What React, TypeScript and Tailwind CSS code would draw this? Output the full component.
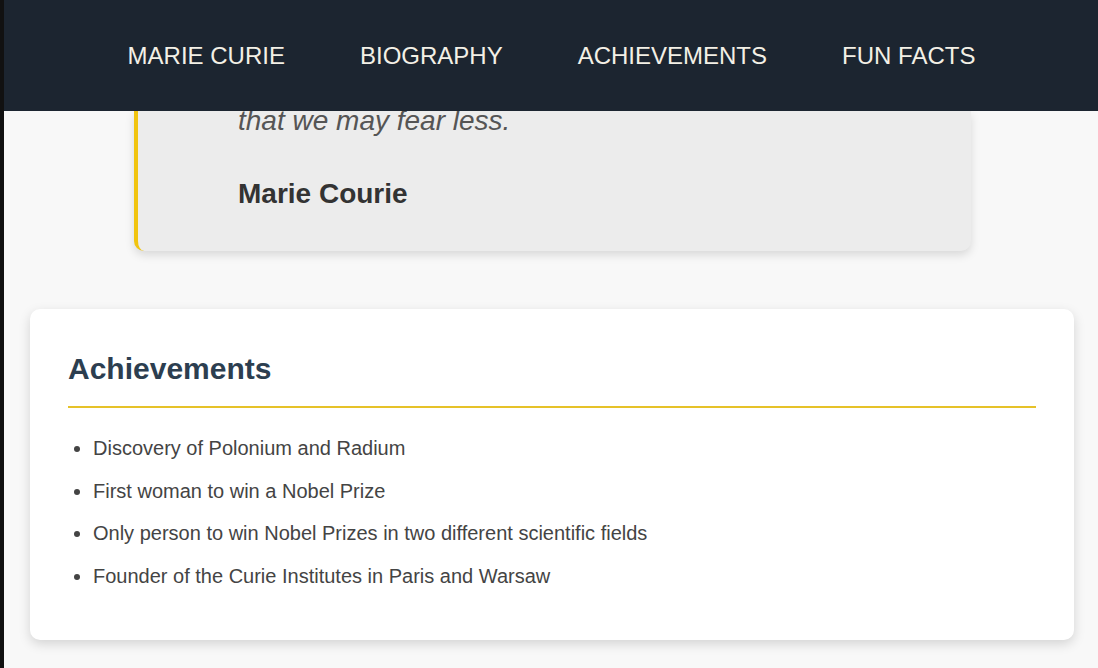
const navLinks = ['MARIE CURIE', 'BIOGRAPHY', 'ACHIEVEMENTS', 'FUN FACTS']

const achievements = [
  'Discovery of Polonium and Radium',
  'First woman to win a Nobel Prize',
  'Only person to win Nobel Prizes in two different scientific fields',
  'Founder of the Curie Institutes in Paris and Warsaw',
]

export default function App() {
  return (
    <div className="flex h-[668px] overflow-hidden bg-[#f8f8f8] font-['Liberation_Sans',Arial,sans-serif]">
      <div className="w-[4px] shrink-0 bg-[#111111]" />

      <div className="flex flex-1 flex-col overflow-hidden">
        <nav className="flex h-[111px] shrink-0 items-center justify-center gap-[75px] bg-[#1c2530] pl-[1px]">
          {navLinks.map((link) => (
            <a
              key={link}
              href="#"
              className="text-[24px] leading-none text-[#f3f0e6]"
            >
              {link}
            </a>
          ))}
        </nav>

        {/* page is scrolled: the quote card's top sits under the nav */}
        <main className="flex-1 overflow-hidden">
          <div className="ml-[130px] w-[837px] rounded-b-[10px] border-l-4 border-[#f1c40f] bg-[#ececec] px-[100px] pb-[40px] shadow-[0_4px_10px_rgba(0,0,0,0.13)]">
            <blockquote className="text-[28px] leading-[20px] italic text-[#555555]">
              that we may fear less.
            </blockquote>
            <p className="mt-[46px] text-[28px] leading-[34px] font-bold text-[#333333]">
              Marie Courie
            </p>
          </div>

          <section className="mt-[58px] ml-[26px] mr-[24px] rounded-[10px] bg-white px-[38px] pt-[42px] pb-[38px] shadow-[0_4px_12px_rgba(0,0,0,0.15)]">
            <h2 className="border-b-2 border-[#e6c229] pb-[19px] text-[30px] leading-[36px] font-bold text-[#2c3e50]">
              Achievements
            </h2>
            <ul className="mt-[24px] list-disc pl-[25px] text-[20px] leading-[32px] text-[#444444]">
              {achievements.map((item) => (
                <li key={item} className="mb-[10.5px]">
                  {item}
                </li>
              ))}
            </ul>
          </section>
        </main>
      </div>
    </div>
  )
}
